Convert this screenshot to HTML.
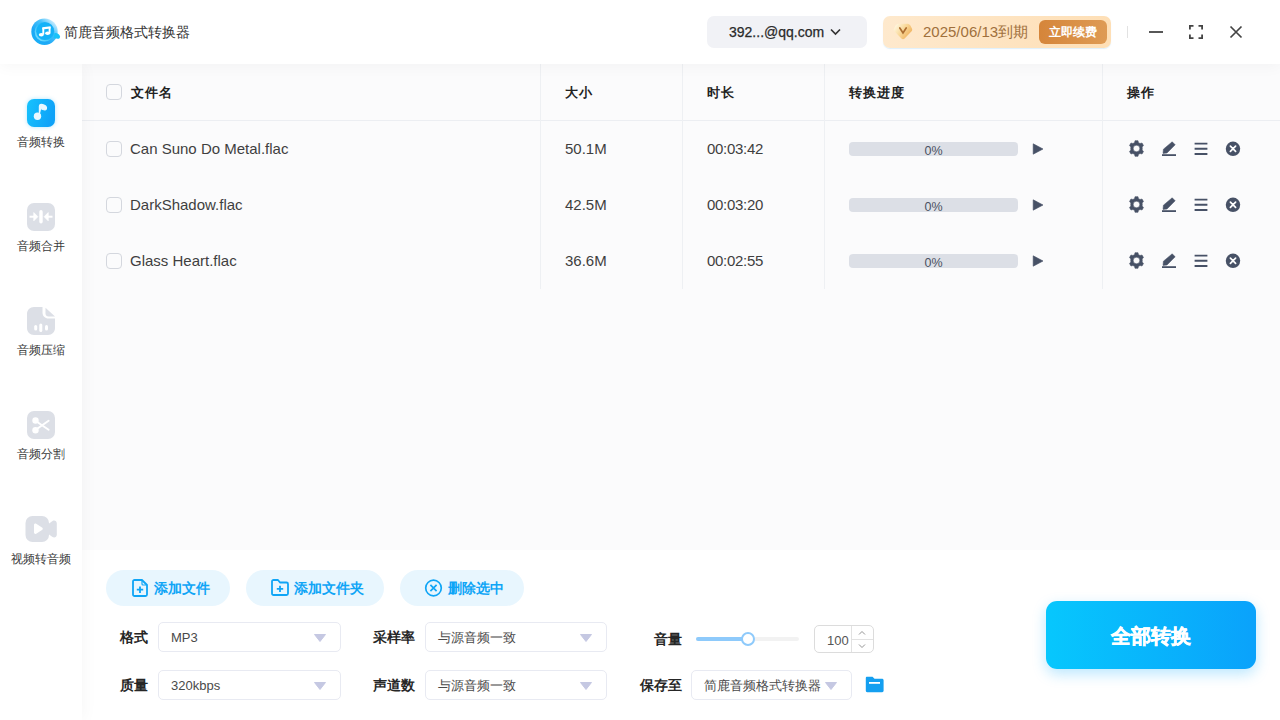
<!DOCTYPE html>
<html><head><meta charset="utf-8">
<style>
*{box-sizing:border-box;margin:0;padding:0}
html,body{width:1280px;height:720px;overflow:hidden;background:#fff;font-family:"Liberation Sans",sans-serif;color:#333}
.abs{position:absolute}
#hdr{position:absolute;left:0;top:0;width:1280px;height:64px;background:#fff;z-index:3;box-shadow:0 3px 14px rgba(0,0,0,0.035)}
#side{position:absolute;left:0;top:64px;width:82px;height:656px;background:#fff;z-index:2;box-shadow:3px 0 14px rgba(0,0,0,0.03)}
#main{position:absolute;left:82px;top:64px;width:1198px;height:486px;background:#fbfbfc;z-index:1}
#bot{position:absolute;left:82px;top:549px;width:1198px;height:171px;background:#fff}
.title{left:64px;top:22px;font-size:14px;color:#333;line-height:20px}
.acct{left:707px;top:16px;width:160px;height:32px;background:#f1f2f6;border-radius:7px}
.acct .t{position:absolute;left:22px;top:8px;font-size:14px;color:#2a2a2a;line-height:16px;-webkit-text-stroke:0.25px #2a2a2a;letter-spacing:0px}
.vip{left:883px;top:16px;width:228px;height:32px;border-radius:7px;background:linear-gradient(90deg,#fee9cd,#fedfb6);box-shadow:0 1px 1px rgba(120,190,240,0.25)}
.vip .date{position:absolute;left:40px;top:8px;font-size:15px;line-height:16px;color:#a0703c}
.vip .btn{position:absolute;left:156px;top:4px;width:68px;height:24px;border-radius:6px;background:linear-gradient(90deg,#d5853a,#de9b55);color:#fff;font-size:12px;font-weight:bold;line-height:24px;text-align:center}
.sep{left:1127px;top:26px;width:1px;height:12px;background:#e2e2e2}
.nav{position:absolute;left:0;width:82px;height:60px}
.nav svg{position:absolute;left:27px;top:0}
.nav .lb{position:absolute;left:0;top:35px;width:82px;font-size:12px;line-height:17px;color:#3a3a3a;text-align:center}
.th{position:absolute;top:21px;font-size:13px;font-weight:bold;color:#222;line-height:16px;letter-spacing:1px;margin-left:1px}
.vline{position:absolute;top:0;width:1px;height:225px;background:#eef0f3}
.cb{position:absolute;left:24px;width:16px;height:16px;border:1px solid #d4d7de;border-radius:4px}
.td{position:absolute;font-size:15px;color:#3f3f3f;line-height:16px}
.pb{position:absolute;left:767px;width:169px;height:14px;border-radius:4px;background:#dcdfe6;font-size:12.5px;color:#4a5162;line-height:19px;text-align:center}
.pill{position:absolute;top:21px;height:36px;border-radius:18px;background:#e8f6fe;color:#0fa5f6;font-size:14px;line-height:16px;font-weight:bold}
.pill svg{position:absolute}
.pill span{position:absolute;top:10px}
.lbl{position:absolute;width:80px;text-align:right;font-size:13.5px;font-weight:bold;color:#262626;line-height:16px}
.sel{position:absolute;height:30px;border:1px solid #e8eaf2;border-radius:5px;background:#fff;font-size:13px;color:#4a4a4a;line-height:30px;padding-left:12px}
.tri{position:absolute;top:11px;width:12px;height:8px}
.ico{position:absolute}
</style></head><body>
<div id="hdr">
  <svg class="abs" style="left:30px;top:17px" width="32" height="30" viewBox="0 0 32 30">
    <defs>
      <linearGradient id="lg1" x1="0.9" y1="0.05" x2="0.1" y2="0.9"><stop offset="0" stop-color="#eaf7ff"/><stop offset="0.35" stop-color="#4cc3fb"/><stop offset="0.7" stop-color="#1ea8f6"/><stop offset="1" stop-color="#18b0f7"/></linearGradient>
      <linearGradient id="lg2" x1="0" y1="1" x2="1" y2="0"><stop offset="0" stop-color="#8fe6ff"/><stop offset="0.5" stop-color="#2cc0fb"/><stop offset="1" stop-color="#1aa8f6"/></linearGradient>
    </defs>
    <circle cx="14.5" cy="14.7" r="13.2" fill="url(#lg1)"/>
    <path d="M24.5 16 C27 15.5 29.5 17 30 19.5 C30.2 21 29 22 27.5 21.8 L23.5 21 Z" fill="#19c2f9"/>
    <circle cx="14.5" cy="14.7" r="9.8" fill="url(#lg2)"/>
    <circle cx="15" cy="14.2" r="8.8" fill="#15b2f8"/>
    <path d="M12.3 10.2 L20.6 9.2 V11.4 L12.3 12.4 Z" fill="#fff"/>
    <path d="M13.3 10.8 V17.6 M19.6 10 V16.2" stroke="#fff" stroke-width="1.9" fill="none"/>
    <ellipse cx="11.3" cy="17.7" rx="2.5" ry="1.8" fill="#fff"/>
    <ellipse cx="17.6" cy="16.3" rx="2.5" ry="1.8" fill="#fff"/>
  </svg>
  <div class="abs title">简鹿音频格式转换器</div>
  <div class="abs acct"><div class="t">392...@qq.com</div>
    <svg class="abs" style="left:123px;top:12px" width="11" height="8" viewBox="0 0 11 8"><path d="M1 1.5 L5.5 6 L10 1.5" stroke="#333" stroke-width="1.7" fill="none"/></svg></div>
  <div class="abs vip">
    <svg class="abs" style="left:10px;top:7px" width="20" height="17" viewBox="0 0 20 17">
      <defs><linearGradient id="dg" x1="0" y1="0.2" x2="1" y2="0.8"><stop offset="0" stop-color="#fff8e2"/><stop offset="0.45" stop-color="#f9d899"/><stop offset="1" stop-color="#eeaa50"/></linearGradient></defs>
      <path d="M2.6 2.6 C3.4 1.4 4.6 0.8 6 0.8 H14 C15.4 0.8 16.6 1.4 17.4 2.6 L18.9 5.4 C19.4 6.3 19.3 7.4 18.6 8.2 L11.6 15.6 C10.7 16.5 9.3 16.5 8.4 15.6 L1.4 8.2 C0.7 7.4 0.6 6.3 1.1 5.4 Z" fill="url(#dg)"/>
      <path d="M6.8 5 L10 10 L13.2 5" stroke="#ad6e30" stroke-width="1.7" fill="none" stroke-linecap="round"/>
    </svg>
    <div class="date">2025/06/13到期</div>
    <div class="btn">立即续费</div>
  </div>
  <div class="abs sep"></div>
  <svg class="abs" style="left:1148px;top:24px" width="16" height="16" viewBox="0 0 16 16"><path d="M1 8 H15" stroke="#444" stroke-width="1.8"/></svg>
  <svg class="abs" style="left:1188px;top:24px" width="16" height="16" viewBox="0 0 16 16"><path d="M1.9 5.5 V1.9 H5.5 M10.5 1.9 H14.1 V5.5 M14.1 10.5 V14.1 H10.5 M5.5 14.1 H1.9 V10.5" stroke="#444" stroke-width="1.8" fill="none"/></svg>
  <svg class="abs" style="left:1228px;top:24px" width="16" height="16" viewBox="0 0 16 16"><path d="M2.5 2.5 L13.5 13.5 M13.5 2.5 L2.5 13.5" stroke="#444" stroke-width="1.7" fill="none"/></svg>
</div>

<div id="side">
  <div class="nav" style="top:35px">
    <svg width="28" height="28" viewBox="0 0 28 28" style="filter:drop-shadow(0 0 2px rgba(30,180,250,0.35))"><defs><linearGradient id="ag" x1="0" y1="0" x2="1" y2="0.3"><stop offset="0" stop-color="#17c3fd"/><stop offset="1" stop-color="#0ea2f8"/></linearGradient></defs>
      <rect x="0" y="0" width="28" height="28" rx="7" fill="url(#ag)"/>
      <circle cx="10.5" cy="17.2" r="3.7" fill="#eaf8ff"/>
      <path d="M12.4 17.2 V7.2 C12.4 5.6 14 5.2 15.6 5.6 C18.5 6.3 20 7.8 19.4 9.8 C19 11 17.5 11.2 16 10.5 L14.2 9.7" fill="#eaf8ff" stroke="#eaf8ff" stroke-width="1.2"/>
    </svg>
    <div class="lb">音频转换</div></div>
  <div class="nav" style="top:139px">
    <svg width="28" height="28" viewBox="0 0 28 28"><rect width="28" height="28" rx="7" fill="#dcdfe6"/>
      <rect x="12.3" y="7" width="3.4" height="13.4" rx="1.7" fill="#fff"/>
      <path d="M2.5 13.7 H8.5" stroke="#fff" stroke-width="2"/><path d="M6.8 9.6 L10.8 13.7 L6.8 17.8 Z" fill="#fff" stroke="#fff" stroke-width="0.8" stroke-linejoin="round"/>
      <path d="M25.5 13.7 H19.5" stroke="#fff" stroke-width="2"/><path d="M21.2 9.6 L17.2 13.7 L21.2 17.8 Z" fill="#fff" stroke="#fff" stroke-width="0.8" stroke-linejoin="round"/>
    </svg>
    <div class="lb">音频合并</div></div>
  <div class="nav" style="top:243px">
    <svg width="28" height="28" viewBox="0 0 28 28">
      <path d="M7 0 H15.5 V5.5 C15.5 9 18 11.5 21.5 11.5 H28 V21 C28 25 25 28 21 28 H7 C3 28 0 25 0 21 V7 C0 3 3 0 7 0 Z" fill="#dcdfe6"/>
      <path d="M18.5 0.8 L28 9.5 H21.5 C19.8 9.5 18.5 8.2 18.5 6.5 Z" fill="#dcdfe6"/>
      <rect x="7.2" y="18" width="3" height="5.5" rx="1.5" fill="#fff"/>
      <rect x="12.3" y="16.5" width="3" height="8.5" rx="1.5" fill="#fff"/>
      <rect x="18" y="18" width="3" height="5.5" rx="1.5" fill="#fff"/>
    </svg>
    <div class="lb">音频压缩</div></div>
  <div class="nav" style="top:347px">
    <svg width="28" height="28" viewBox="0 0 28 28"><rect width="28" height="28" rx="7" fill="#dcdfe6"/>
      <circle cx="8.5" cy="9.5" r="3.2" fill="#fff"/><circle cx="8.5" cy="19.2" r="3.2" fill="#fff"/>
      <path d="M9.5 10.5 L21.6 18.8 M9.5 18.2 L21.6 9.8" stroke="#fff" stroke-width="2" stroke-linecap="round"/>
    </svg>
    <div class="lb">音频分割</div></div>
  <div class="nav" style="top:451px">
    <svg style="left:25px;top:1px" width="32" height="28" viewBox="0 0 32 28">
      <rect x="0.5" y="0" width="23.5" height="26" rx="7" fill="#dcdfe6"/>
      <path d="M22 9 L27.5 5 C29.5 3.8 31.8 5 31.8 7.5 V18.5 C31.8 21 29.5 22.2 27.5 21 L22 17 Z" fill="#dcdfe6"/>
      <path d="M9 9 C9 7.8 10.2 7.2 11.2 7.8 L17 11.4 C18 12 18 13.5 17 14.1 L11.2 17.7 C10.2 18.3 9 17.7 9 16.5 Z" fill="#fff"/>
    </svg>
    <div class="lb" style="top:36px">视频转音频</div></div>
</div>

<div id="main">
  <div class="cb" style="top:20px"></div>
  <div class="th" style="left:48px">文件名</div>
  <div class="th" style="left:482px">大小</div>
  <div class="th" style="left:624px">时长</div>
  <div class="th" style="left:766px">转换进度</div>
  <div class="th" style="left:1044px">操作</div>
  <div class="abs" style="left:0;top:56px;width:1198px;height:1px;background:#eceef2"></div>
  <div class="vline" style="left:458px"></div>
  <div class="vline" style="left:600px"></div>
  <div class="vline" style="left:742px"></div>
  <div class="vline" style="left:1020px"></div>
</div>
<div id="rows" class="abs" style="left:82px;top:64px;width:1198px;height:300px;z-index:1">
<div class="cb" style="top:77px"></div>
<div class="td" style="left:48px;top:77px">Can Suno Do Metal.flac</div>
<div class="td" style="left:483px;top:77px">50.1M</div>
<div class="td" style="left:625px;top:77px;letter-spacing:-0.3px">00:03:42</div>
<div class="pb" style="top:78px">0%</div>
<svg class="ico" style="left:950px;top:79px" width="12" height="12" viewBox="0 0 12 12"><path d="M1.2 0.8 L11 6 L1.2 11.2 Z" fill="#475166" stroke="#475166" stroke-width="0.6" stroke-linejoin="round"/></svg>
<svg class="ico" style="left:1046px;top:76px" width="17" height="17" viewBox="0 0 16 16"><path fill="#475166" fill-rule="evenodd" d="M6.6 0.6 H9.4 L9.9 2.5 A5.6 5.6 0 0 1 11.3 3.3 L13.2 2.8 L14.6 5.2 L13.3 6.6 A5.6 5.6 0 0 1 13.3 9.4 L14.6 10.8 L13.2 13.2 L11.3 12.7 A5.6 5.6 0 0 1 9.9 13.5 L9.4 15.4 H6.6 L6.1 13.5 A5.6 5.6 0 0 1 4.7 12.7 L2.8 13.2 L1.4 10.8 L2.7 9.4 A5.6 5.6 0 0 1 2.7 6.6 L1.4 5.2 L2.8 2.8 L4.7 3.3 A5.6 5.6 0 0 1 6.1 2.5 Z M8 4.9 A3.1 3.1 0 1 0 8 11.1 A3.1 3.1 0 1 0 8 4.9 Z" stroke="#475166" stroke-width="0.5" stroke-linejoin="round"/></svg>
<svg class="ico" style="left:1079px;top:77px" width="16" height="16" viewBox="0 0 16 16"><path fill="#475166" d="M11.2 0.8 L14.2 3.8 L6 12 L2 12.4 L2.4 8.2 Z" stroke="#475166" stroke-width="0.5" stroke-linejoin="round"/><rect x="1" y="13.2" width="14" height="1.8" fill="#475166"/></svg>
<svg class="ico" style="left:1111px;top:77px" width="16" height="16" viewBox="0 0 16 16"><path d="M1.6 2.6 H14.4 M1.6 7.8 H14.4 M1.6 13 H14.4" stroke="#475166" stroke-width="1.9"/></svg>
<svg class="ico" style="left:1143px;top:77px" width="16" height="16" viewBox="0 0 16 16"><circle cx="8" cy="7.8" r="7.2" fill="#475166"/><path d="M5.4 5.2 L10.6 10.4 M10.6 5.2 L5.4 10.4" stroke="#fff" stroke-width="1.7" stroke-linecap="round"/></svg>
<div class="cb" style="top:133px"></div>
<div class="td" style="left:48px;top:133px">DarkShadow.flac</div>
<div class="td" style="left:483px;top:133px">42.5M</div>
<div class="td" style="left:625px;top:133px;letter-spacing:-0.3px">00:03:20</div>
<div class="pb" style="top:134px">0%</div>
<svg class="ico" style="left:950px;top:135px" width="12" height="12" viewBox="0 0 12 12"><path d="M1.2 0.8 L11 6 L1.2 11.2 Z" fill="#475166" stroke="#475166" stroke-width="0.6" stroke-linejoin="round"/></svg>
<svg class="ico" style="left:1046px;top:132px" width="17" height="17" viewBox="0 0 16 16"><path fill="#475166" fill-rule="evenodd" d="M6.6 0.6 H9.4 L9.9 2.5 A5.6 5.6 0 0 1 11.3 3.3 L13.2 2.8 L14.6 5.2 L13.3 6.6 A5.6 5.6 0 0 1 13.3 9.4 L14.6 10.8 L13.2 13.2 L11.3 12.7 A5.6 5.6 0 0 1 9.9 13.5 L9.4 15.4 H6.6 L6.1 13.5 A5.6 5.6 0 0 1 4.7 12.7 L2.8 13.2 L1.4 10.8 L2.7 9.4 A5.6 5.6 0 0 1 2.7 6.6 L1.4 5.2 L2.8 2.8 L4.7 3.3 A5.6 5.6 0 0 1 6.1 2.5 Z M8 4.9 A3.1 3.1 0 1 0 8 11.1 A3.1 3.1 0 1 0 8 4.9 Z" stroke="#475166" stroke-width="0.5" stroke-linejoin="round"/></svg>
<svg class="ico" style="left:1079px;top:133px" width="16" height="16" viewBox="0 0 16 16"><path fill="#475166" d="M11.2 0.8 L14.2 3.8 L6 12 L2 12.4 L2.4 8.2 Z" stroke="#475166" stroke-width="0.5" stroke-linejoin="round"/><rect x="1" y="13.2" width="14" height="1.8" fill="#475166"/></svg>
<svg class="ico" style="left:1111px;top:133px" width="16" height="16" viewBox="0 0 16 16"><path d="M1.6 2.6 H14.4 M1.6 7.8 H14.4 M1.6 13 H14.4" stroke="#475166" stroke-width="1.9"/></svg>
<svg class="ico" style="left:1143px;top:133px" width="16" height="16" viewBox="0 0 16 16"><circle cx="8" cy="7.8" r="7.2" fill="#475166"/><path d="M5.4 5.2 L10.6 10.4 M10.6 5.2 L5.4 10.4" stroke="#fff" stroke-width="1.7" stroke-linecap="round"/></svg>
<div class="cb" style="top:189px"></div>
<div class="td" style="left:48px;top:189px">Glass Heart.flac</div>
<div class="td" style="left:483px;top:189px">36.6M</div>
<div class="td" style="left:625px;top:189px;letter-spacing:-0.3px">00:02:55</div>
<div class="pb" style="top:190px">0%</div>
<svg class="ico" style="left:950px;top:191px" width="12" height="12" viewBox="0 0 12 12"><path d="M1.2 0.8 L11 6 L1.2 11.2 Z" fill="#475166" stroke="#475166" stroke-width="0.6" stroke-linejoin="round"/></svg>
<svg class="ico" style="left:1046px;top:188px" width="17" height="17" viewBox="0 0 16 16"><path fill="#475166" fill-rule="evenodd" d="M6.6 0.6 H9.4 L9.9 2.5 A5.6 5.6 0 0 1 11.3 3.3 L13.2 2.8 L14.6 5.2 L13.3 6.6 A5.6 5.6 0 0 1 13.3 9.4 L14.6 10.8 L13.2 13.2 L11.3 12.7 A5.6 5.6 0 0 1 9.9 13.5 L9.4 15.4 H6.6 L6.1 13.5 A5.6 5.6 0 0 1 4.7 12.7 L2.8 13.2 L1.4 10.8 L2.7 9.4 A5.6 5.6 0 0 1 2.7 6.6 L1.4 5.2 L2.8 2.8 L4.7 3.3 A5.6 5.6 0 0 1 6.1 2.5 Z M8 4.9 A3.1 3.1 0 1 0 8 11.1 A3.1 3.1 0 1 0 8 4.9 Z" stroke="#475166" stroke-width="0.5" stroke-linejoin="round"/></svg>
<svg class="ico" style="left:1079px;top:189px" width="16" height="16" viewBox="0 0 16 16"><path fill="#475166" d="M11.2 0.8 L14.2 3.8 L6 12 L2 12.4 L2.4 8.2 Z" stroke="#475166" stroke-width="0.5" stroke-linejoin="round"/><rect x="1" y="13.2" width="14" height="1.8" fill="#475166"/></svg>
<svg class="ico" style="left:1111px;top:189px" width="16" height="16" viewBox="0 0 16 16"><path d="M1.6 2.6 H14.4 M1.6 7.8 H14.4 M1.6 13 H14.4" stroke="#475166" stroke-width="1.9"/></svg>
<svg class="ico" style="left:1143px;top:189px" width="16" height="16" viewBox="0 0 16 16"><circle cx="8" cy="7.8" r="7.2" fill="#475166"/><path d="M5.4 5.2 L10.6 10.4 M10.6 5.2 L5.4 10.4" stroke="#fff" stroke-width="1.7" stroke-linecap="round"/></svg>
</div>

<div id="bot">
  <div class="pill" style="left:24px;width:124px">
    <svg style="left:26px;top:9px" width="16" height="18" viewBox="0 0 16 18"><path d="M2.5 1 H10 L15 6 V15.5 C15 16.3 14.3 17 13.5 17 H2.5 C1.7 17 1 16.3 1 15.5 V2.5 C1 1.7 1.7 1 2.5 1 Z" fill="none" stroke="#0fa5f6" stroke-width="1.8" stroke-linejoin="round"/><path d="M10 1.5 V5 C10 5.5 10.5 6 11 6 H14.5" fill="none" stroke="#0fa5f6" stroke-width="1.2"/><path d="M8 7.5 V14 M4.8 10.7 H11.2" stroke="#0fa5f6" stroke-width="1.8"/></svg>
    <span style="left:48px">添加文件</span></div>
  <div class="pill" style="left:164px;width:138px">
    <svg style="left:25px;top:9px" width="18" height="17" viewBox="0 0 18 17"><path d="M2.5 1 H7 L9 3.5 H15.5 C16.3 3.5 17 4.2 17 5 V14.5 C17 15.3 16.3 16 15.5 16 H2.5 C1.7 16 1 15.3 1 14.5 V2.5 C1 1.7 1.7 1 2.5 1 Z" fill="none" stroke="#0fa5f6" stroke-width="1.8" stroke-linejoin="round"/><path d="M9 6.7 V13 M5.8 9.9 H12.2" stroke="#0fa5f6" stroke-width="1.8"/></svg>
    <span style="left:48px">添加文件夹</span></div>
  <div class="pill" style="left:318px;width:124px">
    <svg style="left:24px;top:9px" width="19" height="19" viewBox="0 0 19 19"><circle cx="9.5" cy="9" r="7.8" fill="none" stroke="#0fa5f6" stroke-width="1.7"/><path d="M6.4 5.9 L12.6 12.1 M12.6 5.9 L6.4 12.1" stroke="#0fa5f6" stroke-width="1.7"/></svg>
    <span style="left:48px">删除选中</span></div>

  <div class="lbl" style="left:-14px;top:81px">格式</div>
  <div class="sel" style="left:76px;top:73px;width:183px">MP3<svg class="tri" style="left:155px" viewBox="0 0 12 8"><path d="M0.5 0.5 H11.5 L6 7.5 Z" fill="#c5c8e2" stroke="#c5c8e2" stroke-linejoin="round"/></svg></div>
  <div class="lbl" style="left:253px;top:81px">采样率</div>
  <div class="sel" style="left:343px;top:73px;width:182px">与源音频一致<svg class="tri" style="left:154px" viewBox="0 0 12 8"><path d="M0.5 0.5 H11.5 L6 7.5 Z" fill="#c5c8e2" stroke="#c5c8e2" stroke-linejoin="round"/></svg></div>
  <div class="lbl" style="left:520px;top:83px">音量</div>
  <!-- slider -->
  <div class="abs" style="left:614px;top:88px;width:103px;height:4px;border-radius:2px;background:#f2f2f2"></div>
  <div class="abs" style="left:614px;top:88px;width:52px;height:4px;border-radius:2px;background:#8ecafb"></div>
  <div class="abs" style="left:659px;top:83px;width:14px;height:14px;border-radius:7px;background:#fff;border:2px solid #8ecafb"></div>
  <!-- number -->
  <div class="abs" style="left:732px;top:76px;width:60px;height:28px;border:1px solid #dcdcdc;border-radius:5px;background:#fff">
    <div class="abs" style="left:12px;top:7px;font-size:13px;line-height:15px;color:#555">100</div>
    <div class="abs" style="left:36px;top:0;width:1px;height:26px;background:#e2e2e2"></div>
    <div class="abs" style="left:37px;top:13px;width:21px;height:1px;background:#e2e2e2"></div>
    <svg class="abs" style="left:43px;top:4px" width="8" height="6" viewBox="0 0 8 6"><path d="M1 4.5 L4 1.5 L7 4.5" stroke="#888" stroke-width="0.9" fill="none"/></svg>
    <svg class="abs" style="left:43px;top:17px" width="8" height="6" viewBox="0 0 8 6"><path d="M1 1.5 L4 4.5 L7 1.5" stroke="#888" stroke-width="0.9" fill="none"/></svg>
  </div>

  <div class="lbl" style="left:-14px;top:129px">质量</div>
  <div class="sel" style="left:76px;top:121px;width:183px">320kbps<svg class="tri" style="left:155px" viewBox="0 0 12 8"><path d="M0.5 0.5 H11.5 L6 7.5 Z" fill="#c5c8e2" stroke="#c5c8e2" stroke-linejoin="round"/></svg></div>
  <div class="lbl" style="left:253px;top:129px">声道数</div>
  <div class="sel" style="left:343px;top:121px;width:182px">与源音频一致<svg class="tri" style="left:154px" viewBox="0 0 12 8"><path d="M0.5 0.5 H11.5 L6 7.5 Z" fill="#c5c8e2" stroke="#c5c8e2" stroke-linejoin="round"/></svg></div>
  <div class="lbl" style="left:520px;top:129px">保存至</div>
  <div class="sel" style="left:609px;top:121px;width:161px">简鹿音频格式转换器<svg class="tri" style="left:133px" viewBox="0 0 12 8"><path d="M0.5 0.5 H11.5 L6 7.5 Z" fill="#c5c8e2" stroke="#c5c8e2" stroke-linejoin="round"/></svg></div>
  <svg class="abs" style="left:783px;top:127px" width="20" height="17" viewBox="0 0 20 17"><path d="M0.8 2 C0.8 1.2 1.4 0.8 2 0.8 H7.5 L9.5 2.8 H17 C17.8 2.8 18.6 3.4 18.6 4.2 V14.8 C18.6 15.6 17.9 16.2 17.2 16.2 H2.2 C1.4 16.2 0.8 15.6 0.8 14.8 Z" fill="#149ff0"/><rect x="4" y="6" width="11" height="1.8" fill="#fff"/></svg>

  <div class="abs" style="left:964px;top:52px;width:210px;height:68px;border-radius:11px;background:linear-gradient(90deg,#07c7fd,#0aa2fb);box-shadow:0 5px 14px rgba(10,170,250,0.28)">
    <div class="abs" style="left:0;top:24px;width:210px;text-align:center;color:#fff;font-size:20px;font-weight:bold;line-height:22px;-webkit-text-stroke:0.5px #fff">全部转换</div>
  </div>
</div>
</body></html>
